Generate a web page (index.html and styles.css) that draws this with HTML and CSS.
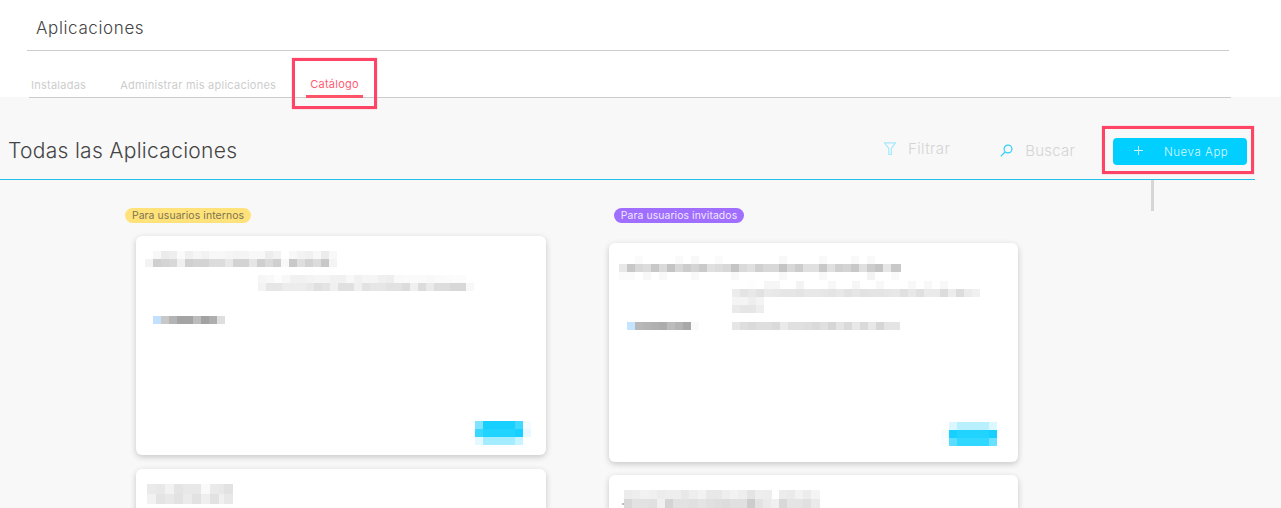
FILE: index.html
```html
<!DOCTYPE html>
<html lang="es">
<head>
  <meta charset="UTF-8">
  <meta name="viewport" content="width=device-width, initial-scale=1.0">
  <title>Aplicaciones</title>
  <link rel="stylesheet" href="styles.css">
</head>
<body>
  <header class="top">
    <h1 class="top-title">Aplicaciones</h1>
    <nav class="tabs">
      <a class="tab">Instaladas</a>
      <a class="tab">Administrar mis aplicaciones</a>
      <a class="tab tab-active">Catálogo<span class="mark mark-tab"></span></a>
    </nav>
  </header>

  <main class="catalog">
    <div class="catalog-head">
      <h2 class="catalog-title">Todas las Aplicaciones</h2>
      <div class="tools">
        <span class="tool tool-filter">
          <svg width="12" height="13" viewBox="0 0 12 13" fill="none" stroke="#a5e9fd" stroke-width="1.2"><path d="M.5 .8h11L7.4 6.4v6H4.8v-6z"/></svg>
          Filtrar
        </span>
        <span class="tool tool-search">
          <svg width="13" height="13" viewBox="0 0 13 13" fill="none" stroke="#2fd0fb" stroke-width="1.2"><circle cx="8" cy="5" r="3.9"/><path d="M5 8l-4.2 4.4"/></svg>
          Buscar
        </span>
        <button class="new-app">
          <svg width="11" height="11" viewBox="0 0 11 11" stroke="#c8f3ff" stroke-width="1"><path d="M5.5 1v9M1 5.5h9"/></svg>
          <span>Nueva App</span>
          <span class="mark mark-button"></span>
        </button>
      </div>
    </div>
    <div class="scroll-thumb"></div>

    <div class="columns">
      <section class="col col-internal">
        <span class="badge badge-yellow">Para usuarios internos</span>
        <article class="card card-first">
          <svg class="mosaic" width="410" height="219">
            <g transform="translate(9 15)">
              <rect x="8" fill="#f8f8f8"/><rect x="16" fill="#ebebeb"/><rect x="24" fill="#eee"/><rect x="32" fill="#fafafa"/><rect x="40" fill="#f0f0f0"/><rect x="48" fill="#f6f6f6"/><rect x="56" fill="#f2f2f2"/><rect x="64" fill="#f8f8f8"/><rect x="72" fill="#f8f8f8"/><rect x="80" fill="#f6f6f6"/><rect x="88" fill="#f4f4f4"/><rect x="96" fill="#f4f4f4"/><rect x="104" fill="#f8f8f8"/><rect x="112" fill="#f8f8f8"/><rect x="120" fill="#ededed"/><rect x="128" fill="#f3f3f3"/><rect x="144" fill="#f8f8f8"/><rect x="152" fill="#f3f3f3"/><rect x="160" fill="#f1f1f1"/><rect x="168" fill="#f8f8f8"/><rect x="176" fill="#ececec"/><rect x="184" fill="#f8f8f8"/>
            </g>
            <g transform="translate(9 23)">
              <rect x="0" fill="#f3f3f3"/><rect x="8" fill="#cfcfcf"/><rect x="16" fill="#d4d4d4"/><rect x="24" fill="#d8d8d8"/><rect x="32" fill="#f0f0f0"/><rect x="40" fill="#d0d0d0"/><rect x="48" fill="#d3d3d3"/><rect x="56" fill="#d3d3d3"/><rect x="64" fill="#dcdcdc"/><rect x="72" fill="#dcdcdc"/><rect x="80" fill="#e8e8e8"/><rect x="88" fill="#d3d3d3"/><rect x="96" fill="#d3d3d3"/><rect x="104" fill="#e6e6e6"/><rect x="112" fill="#cfcfcf"/><rect x="120" fill="#dadada"/><rect x="128" fill="#cfcfcf"/><rect x="136" fill="#f8f8f8"/><rect x="144" fill="#c8c8c8"/><rect x="152" fill="#dedede"/><rect x="160" fill="#d2d2d2"/><rect x="168" fill="#dcdcdc"/><rect x="176" fill="#c8c8c8"/><rect x="184" fill="#f4f4f4"/>
            </g>
            <g transform="translate(122 39)">
              <rect x="0" fill="#f6f6f6"/><rect x="8" fill="#f8f8f8"/><rect x="16" fill="#fdfdfd"/><rect x="24" fill="#f8f8f8"/><rect x="32" fill="#f1f1f1"/><rect x="40" fill="#f1f1f1"/><rect x="48" fill="#f3f3f3"/><rect x="56" fill="#f5f5f5"/><rect x="64" fill="#f5f5f5"/><rect x="72" fill="#f1f1f1"/><rect x="80" fill="#f1f1f1"/><rect x="88" fill="#f8f8f8"/><rect x="96" fill="#f1f1f1"/><rect x="104" fill="#f5f5f5"/><rect x="112" fill="#f5f5f5"/><rect x="120" fill="#f0f0f0"/><rect x="128" fill="#eeeeee"/><rect x="136" fill="#f9f9f9"/><rect x="144" fill="#fafafa"/><rect x="152" fill="#fafafa"/><rect x="160" fill="#fafafa"/><rect x="168" fill="#f8f8f8"/><rect x="176" fill="#fafafa"/><rect x="184" fill="#fbfbfb"/><rect x="192" fill="#fcfcfc"/><rect x="200" fill="#fcfcfc"/>
            </g>
            <g transform="translate(122 47)">
              <rect x="0" fill="#f3f3f3"/><rect x="8" fill="#e6e6e6"/><rect x="16" fill="#e6e6e6"/><rect x="24" fill="#ececec"/><rect x="32" fill="#ececec"/><rect x="40" fill="#ececec"/><rect x="48" fill="#e8e8e8"/><rect x="56" fill="#e0e0e0"/><rect x="64" fill="#e4e4e4"/><rect x="72" fill="#f0f0f0"/><rect x="80" fill="#e0e0e0"/><rect x="88" fill="#e0e0e0"/><rect x="96" fill="#f0f0f0"/><rect x="104" fill="#e2e2e2"/><rect x="112" fill="#e6e6e6"/><rect x="120" fill="#e6e6e6"/><rect x="128" fill="#e2e2e2"/><rect x="136" fill="#e2e2e2"/><rect x="144" fill="#dcdcdc"/><rect x="152" fill="#f0f0f0"/><rect x="160" fill="#dcdcdc"/><rect x="168" fill="#eaeaea"/><rect x="176" fill="#dddddd"/><rect x="184" fill="#dddddd"/><rect x="192" fill="#d8d8d8"/><rect x="200" fill="#d8d8d8"/><rect x="208" fill="#f8f8f8"/>
            </g>
            <g transform="translate(17 80)">
              <rect x="0" fill="#c4e0ff"/><rect x="8" fill="#c8c8c8"/><rect x="16" fill="#b4b4b4"/><rect x="24" fill="#a4a4a4"/><rect x="32" fill="#a4a4a4"/><rect x="40" fill="#bcbcbc"/><rect x="48" fill="#a2a2a2"/><rect x="56" fill="#aeaeae"/><rect x="64" fill="#dedede"/>
            </g>
            <g transform="translate(339 185)">
              <rect x="0" fill="#80e3ff"/><rect x="8" fill="#18d0ff"/><rect x="16" fill="#18d0ff"/><rect x="24" fill="#18d0ff"/><rect x="32" fill="#18d0ff"/><rect x="40" fill="#40d8ff"/><rect x="48" fill="#f4fcff"/>
            </g>
            <g transform="translate(339 193)">
              <rect x="0" fill="#38d8ff"/><rect x="8" fill="#20d4ff"/><rect x="16" fill="#20d4ff"/><rect x="24" fill="#20d4ff"/><rect x="32" fill="#20d4ff"/><rect x="40" fill="#18d0ff"/><rect x="48" fill="#e8faff"/>
            </g>
            <g transform="translate(339 201)">
              <rect x="0" fill="#e4f8ff"/><rect x="8" fill="#a4ecff"/><rect x="16" fill="#a4ecff"/><rect x="24" fill="#a4ecff"/><rect x="32" fill="#a4ecff"/><rect x="40" fill="#c8f4ff"/>
            </g>
          </svg>
        </article>
        <article class="card">
          <svg class="mosaic mosaic-wide" width="410" height="60">
            <g transform="translate(11 15)">
              <rect x="0" fill="#eaeaea"/><rect x="9" fill="#e8e8e8"/><rect x="18" fill="#f2f2f2"/><rect x="27" fill="#e4e4e4"/><rect x="36" fill="#e8e8e8"/><rect x="45" fill="#e8e8e8"/><rect x="54" fill="#fafafa"/><rect x="63" fill="#eaeaea"/><rect x="72" fill="#e8e8e8"/><rect x="77" fill="#e2e2e2"/>
            </g>
            <g transform="translate(11 25)">
              <rect x="0" fill="#f2f2f2"/><rect x="9" fill="#e4e4e4"/><rect x="18" fill="#e8e8e8"/><rect x="27" fill="#e2e2e2"/><rect x="36" fill="#ebebeb"/><rect x="45" fill="#e2e2e2"/><rect x="54" fill="#efefef"/><rect x="63" fill="#e2e2e2"/><rect x="72" fill="#f0f0f0"/><rect x="77" fill="#e8e8e8"/>
            </g>
          </svg>
        </article>
      </section>

      <section class="col col-guest">
        <span class="badge badge-purple">Para usuarios invitados</span>
        <article class="card card-first card-guest">
          <svg class="mosaic" width="409" height="219">
            <g transform="translate(10 21)">
              <rect x="0" fill="#e8e8e8"/><rect x="8" fill="#c8c8c8"/><rect x="16" fill="#d8d8d8"/><rect x="24" fill="#dcdcdc"/><rect x="32" fill="#c8c8c8"/><rect x="40" fill="#dadada"/><rect x="48" fill="#c4c4c4"/><rect x="56" fill="#d8d8d8"/><rect x="64" fill="#cccccc"/><rect x="72" fill="#d4d4d4"/><rect x="80" fill="#cacaca"/><rect x="88" fill="#e0e0e0"/><rect x="96" fill="#dcdcdc"/><rect x="104" fill="#d8d8d8"/><rect x="112" fill="#c4c4c4"/><rect x="120" fill="#dadada"/><rect x="128" fill="#e0e0e0"/><rect x="136" fill="#d0d0d0"/><rect x="144" fill="#d8d8d8"/><rect x="152" fill="#d8d8d8"/><rect x="160" fill="#c4c4c4"/><rect x="168" fill="#d8d8d8"/><rect x="176" fill="#cccccc"/><rect x="184" fill="#e0e0e0"/><rect x="192" fill="#e0e0e0"/><rect x="200" fill="#c8c8c8"/><rect x="208" fill="#e0e0e0"/><rect x="216" fill="#d0d0d0"/><rect x="224" fill="#d4d4d4"/><rect x="232" fill="#c8c8c8"/><rect x="240" fill="#e0e0e0"/><rect x="248" fill="#cccccc"/><rect x="256" fill="#c4c4c4"/><rect x="264" fill="#e6e6e6"/><rect x="272" fill="#c8c8c8"/><rect x="274" fill="#c8c8c8"/>
            </g>
            <g transform="translate(10 13)">
              <rect x="16" fill="#fbfbfb"/><rect x="56" fill="#fafafa"/><rect x="72" fill="#f8f8f8"/><rect x="96" fill="#fbfbfb"/><rect x="160" fill="#f8f8f8"/><rect x="200" fill="#f9f9f9"/><rect x="232" fill="#f9f9f9"/><rect x="248" fill="#f9f9f9"/>
            </g>
            <g transform="translate(10 29)">
              <rect x="0" fill="#fbfbfb"/><rect x="8" fill="#fbfbfb"/><rect x="24" fill="#f8f8f8"/><rect x="40" fill="#f9f9f9"/><rect x="72" fill="#f9f9f9"/><rect x="112" fill="#f9f9f9"/><rect x="160" fill="#f9f9f9"/><rect x="200" fill="#f9f9f9"/><rect x="248" fill="#f3f3f3"/><rect x="272" fill="#fafafa"/>
            </g>
            <g transform="translate(123 38)">
              <rect x="16" fill="#fdfdfd"/><rect x="32" fill="#f6f6f6"/><rect x="40" fill="#f6f6f6"/><rect x="64" fill="#f4f4f4"/><rect x="96" fill="#f7f7f7"/><rect x="120" fill="#f6f6f6"/><rect x="144" fill="#f8f8f8"/><rect x="176" fill="#f8f8f8"/><rect x="192" fill="#f8f8f8"/><rect x="208" fill="#f8f8f8"/>
            </g>
            <g transform="translate(123 46)">
              <rect x="0" fill="#ececec"/><rect x="8" fill="#e4e4e4"/><rect x="16" fill="#e8e8e8"/><rect x="24" fill="#e2e2e2"/><rect x="32" fill="#eaeaea"/><rect x="40" fill="#e8e8e8"/><rect x="48" fill="#e6e6e6"/><rect x="56" fill="#e6e6e6"/><rect x="64" fill="#e4e4e4"/><rect x="72" fill="#e8e8e8"/><rect x="80" fill="#e8e8e8"/><rect x="88" fill="#e6e6e6"/><rect x="96" fill="#e4e4e4"/><rect x="104" fill="#e8e8e8"/><rect x="112" fill="#e2e2e2"/><rect x="120" fill="#e6e6e6"/><rect x="128" fill="#e2e2e2"/><rect x="136" fill="#e4e4e4"/><rect x="144" fill="#e4e4e4"/><rect x="152" fill="#e6e6e6"/><rect x="160" fill="#e8e8e8"/><rect x="168" fill="#e0e0e0"/><rect x="176" fill="#e8e8e8"/><rect x="184" fill="#e0e0e0"/><rect x="192" fill="#eaeaea"/><rect x="200" fill="#eaeaea"/><rect x="208" fill="#dcdcdc"/><rect x="216" fill="#ececec"/><rect x="224" fill="#dcdcdc"/><rect x="232" fill="#ebebeb"/><rect x="240" fill="#f0f0f0"/>
            </g>
            <g transform="translate(123 54)">
              <rect x="0" fill="#f4f4f4"/><rect x="8" fill="#f4f4f4"/><rect x="16" fill="#eeeeee"/><rect x="24" fill="#f4f4f4"/>
            </g>
            <g transform="translate(123 62)">
              <rect x="0" fill="#eaeaea"/><rect x="8" fill="#e6e6e6"/><rect x="16" fill="#e6e6e6"/><rect x="24" fill="#eeeeee"/>
            </g>
            <g transform="translate(123 79)">
              <rect x="0" fill="#e6e6e6"/><rect x="8" fill="#dedede"/><rect x="16" fill="#dadada"/><rect x="24" fill="#dedede"/><rect x="32" fill="#dedede"/><rect x="40" fill="#dadada"/><rect x="48" fill="#eaeaea"/><rect x="56" fill="#e0e0e0"/><rect x="64" fill="#e0e0e0"/><rect x="72" fill="#dedede"/><rect x="80" fill="#dadada"/><rect x="88" fill="#e0e0e0"/><rect x="96" fill="#d6d6d6"/><rect x="104" fill="#e4e4e4"/><rect x="112" fill="#dadada"/><rect x="120" fill="#e8e8e8"/><rect x="128" fill="#dadada"/><rect x="136" fill="#e8e8e8"/><rect x="144" fill="#d6d6d6"/><rect x="152" fill="#e4e4e4"/><rect x="160" fill="#e4e4e4"/>
            </g>
            <g transform="translate(18 79)">
              <rect x="0" fill="#c4e4ff"/><rect x="8" fill="#b8b8b8"/><rect x="16" fill="#b4b4b4"/><rect x="24" fill="#b0b0b0"/><rect x="32" fill="#acacac"/><rect x="40" fill="#bcbcbc"/><rect x="48" fill="#b4b4b4"/><rect x="56" fill="#a8a8a8"/><rect x="64" fill="#fafafa"/>
            </g>
            <g transform="translate(340 179)">
              <rect x="0" fill="#dcf6ff"/><rect x="8" fill="#b8f0ff"/><rect x="16" fill="#b8f0ff"/><rect x="24" fill="#b8f0ff"/><rect x="32" fill="#b8f0ff"/><rect x="40" fill="#dcf8ff"/>
            </g>
            <g transform="translate(340 187)">
              <rect x="-8" fill="#f4fcff"/><rect x="0" fill="#18d0ff"/><rect x="8" fill="#20d4ff"/><rect x="16" fill="#20d4ff"/><rect x="24" fill="#20d4ff"/><rect x="32" fill="#20d4ff"/><rect x="40" fill="#18d0ff"/>
            </g>
            <g transform="translate(340 195)">
              <rect x="-8" fill="#fafdff"/><rect x="0" fill="#5cdcff"/><rect x="8" fill="#30d8ff"/><rect x="16" fill="#30d8ff"/><rect x="24" fill="#30d8ff"/><rect x="32" fill="#30d8ff"/><rect x="40" fill="#68e0ff"/>
            </g>
          </svg>
        </article>
        <article class="card card-guest">
          <svg class="mosaic mosaic-wide" width="409" height="60">
            <g transform="translate(15 15)">
              <rect x="0" fill="#ececec"/><rect x="8" fill="#eeeeee"/><rect x="16" fill="#f2f2f2"/><rect x="25" fill="#f0f0f0"/><rect x="33" fill="#ececec"/><rect x="41" fill="#eeeeee"/><rect x="49" fill="#eeeeee"/><rect x="57" fill="#e8e8e8"/><rect x="65" fill="#eeeeee"/><rect x="74" fill="#f2f2f2"/><rect x="82" fill="#e8e8e8"/><rect x="90" fill="#e8e8e8"/><rect x="98" fill="#eeeeee"/><rect x="106" fill="#f2f2f2"/><rect x="114" fill="#eeeeee"/><rect x="123" fill="#e4e4e4"/><rect x="131" fill="#eeeeee"/><rect x="139" fill="#ededed"/><rect x="155" fill="#ececec"/><rect x="163" fill="#eaeaea"/><rect x="171" fill="#f2f2f2"/><rect x="179" fill="#ececec"/><rect x="187" fill="#f4f4f4"/>
            </g>
            <g transform="translate(15 24)">
              <rect x="0" fill="#d8d8d8"/><rect x="8" fill="#e2e2e2"/><rect x="16" fill="#e2e2e2"/><rect x="25" fill="#e0e0e0"/><rect x="33" fill="#f0f0f0"/><rect x="41" fill="#d4d4d4"/><rect x="49" fill="#e2e2e2"/><rect x="57" fill="#e2e2e2"/><rect x="65" fill="#e0e0e0"/><rect x="74" fill="#e4e4e4"/><rect x="82" fill="#e0e0e0"/><rect x="90" fill="#dedede"/><rect x="98" fill="#dcdcdc"/><rect x="106" fill="#e0e0e0"/><rect x="114" fill="#e0e0e0"/><rect x="123" fill="#cccccc"/><rect x="131" fill="#e2e2e2"/><rect x="139" fill="#eaeaea"/><rect x="147" fill="#f0f0f0"/><rect x="155" fill="#d8d8d8"/><rect x="163" fill="#e4e4e4"/><rect x="171" fill="#e4e4e4"/><rect x="179" fill="#e0e0e0"/><rect x="187" fill="#eaeaea"/>
            </g>
            <circle cx="14" cy="29" r="0.8" fill="#666"/>
          </svg>
        </article>
      </section>
    </div>
  </main>
</body>
</html>
```

FILE: styles.css
```css
html {
  overflow: hidden;
}

body {
  margin: 0;
  background-color: #f8f8f8;
  font-family: "Inter", "Open Sans", sans-serif;
  color: #444;
}

/* Top header */
.top {
  height: 97px;
  background-color: #fff;
}

.top-title {
  box-sizing: border-box;
  height: 51px;
  margin: 0 52px 0 27px;
  padding: 18px 0 0 9px;
  border-bottom: 1px solid #ccc;
  font-size: 17px;
  line-height: 20px;
  font-weight: 300;
  letter-spacing: 0.62px;
}

.tabs {
  display: flex;
  box-sizing: border-box;
  height: 47px;
  margin: 0 50px 0 29px;
  padding-left: 2px;
  border-bottom: 1px solid #ccc;
}

.tab {
  position: relative;
  margin-right: 34px;
  padding-top: 26px;
  font-size: 11px;
  line-height: 16px;
  letter-spacing: 0.25px;
  color: #cdcdcd;
}

.tab-active {
  margin-left: -4px;
  padding: 25px 4px 0;
  height: 19px;
  border-bottom: 3px solid #ff5468;
  color: #ff5c74;
}

/* Red annotation boxes */
.mark {
  position: absolute;
  border: 3px solid #ff4466;
  box-shadow: 0 0 1px rgba(255, 68, 102, 0.6);
}

.mark-tab {
  top: 7px;
  left: -14px;
  right: -14px;
  bottom: -14px;
}

.mark-button {
  top: -12px;
  left: -11px;
  right: -7px;
  bottom: -9px;
}

/* Catalog */
.catalog {
  position: relative;
}

.catalog-head {
  display: flex;
  align-items: center;
  justify-content: space-between;
  box-sizing: border-box;
  width: 1255px;
  height: 83px;
  padding: 29px 8px 0 8px;
  border-bottom: 1px solid #22bfe8;
}

.catalog-title {
  margin: 0 0 4px;
  font-size: 21px;
  line-height: 28px;
  font-weight: 300;
  letter-spacing: 0.3px;
}

.tools {
  display: flex;
  align-items: center;
  margin-bottom: 2px;
}

.tool {
  display: flex;
  align-items: center;
  font-size: 15px;
  font-weight: 300;
  color: #d4d4d4;
}

.tool-filter {
  gap: 12px;
  margin: -6px 50px 0 0;
  letter-spacing: 0.4px;
}

.tool-search {
  gap: 12px;
  margin: -2px 38px 0 0;
  letter-spacing: 0.2px;
}

.new-app {
  position: relative;
  display: flex;
  align-items: center;
  width: 134px;
  height: 27px;
  padding: 0 0 0 20px;
  border: none;
  border-radius: 4px;
  background-color: #00cfff;
  color: #d8f6ff;
  font-family: inherit;
  font-size: 11.5px;
  font-weight: 300;
  letter-spacing: 0.55px;
}

.new-app svg {
  margin: -2px 20px 0 0;
}

.scroll-thumb {
  position: absolute;
  top: 83px;
  left: 1151px;
  width: 3px;
  height: 31px;
  background-color: #d6d6d6;
}

.columns {
  display: flex;
  padding: 28px 0 0 125px;
}

.col-internal {
  width: 421px;
}

.col-guest {
  width: 409px;
  margin-left: 63px;
}

.badge {
  display: block;
  box-sizing: border-box;
  height: 15px;
  border-radius: 8px;
  font-size: 10.4px;
  line-height: 15px;
  letter-spacing: 0.1px;
  text-align: center;
}

.badge-yellow {
  width: 126px;
  background-color: #ffe27a;
  color: #7d7350;
}

.badge-purple {
  width: 130px;
  margin-left: 5px;
  background-color: #a06fff;
  color: #f0e8ff;
}

.card {
  width: 410px;
  margin: 14px 0 0 11px;
  border-radius: 6px;
  background-color: #fff;
  box-shadow: 0 2px 6px rgba(0, 0, 0, 0.2);
  overflow: hidden;
}

.card-first {
  margin-top: 13px;
}

.card-guest {
  width: 409px;
  margin-left: 0;
  margin-top: 13px;
}

.card-guest.card-first {
  margin-top: 20px;
}

.mosaic {
  display: block;
}

.mosaic rect {
  width: 8px;
  height: 8px;
}

.mosaic-wide rect {
  width: 9px;
  height: 10px;
}
```
